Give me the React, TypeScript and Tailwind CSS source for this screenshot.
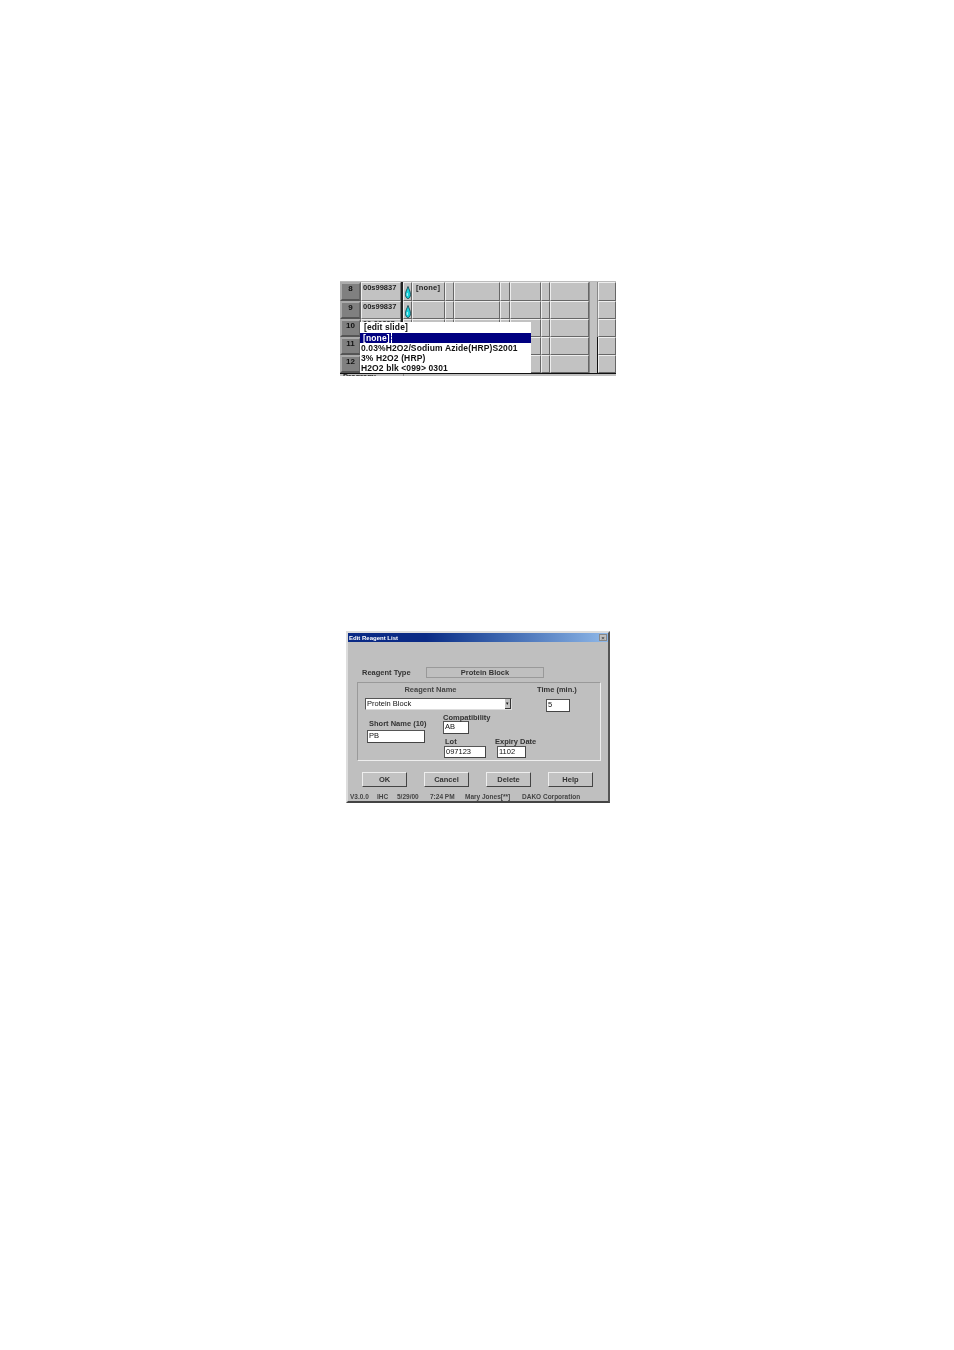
import { ReactNode } from "react";

const font = "font-['Liberation_Sans',Arial,sans-serif]";

function Cell({ w, children }: { w: string; children?: ReactNode }) {
  return (
    <div className={`${w} h-full shrink-0 overflow-hidden border border-t-[#eee] border-l-[#eee] border-r-[#666] border-b-[#666] bg-[#c2c2c2] text-[7.5px] font-bold leading-[10px] text-[#222]`}>
      {children}
    </div>
  );
}

function Drop() {
  return (
    <svg viewBox="0 0 6 13" className="ml-[1px] mt-[3px] block h-[13px] w-[6px]">
      <path d="M3 0.5 C3.6 3 5.5 5 5.5 8.5 C5.5 11 4.2 12.5 3 12.5 C1.8 12.5 0.5 11 0.5 8.5 C0.5 5 2.4 3 3 0.5 Z" fill="#19d3dc" stroke="#0a3a44" strokeWidth="0.8" />
      <path d="M2.3 7 L2.3 10" stroke="#e6ffff" strokeWidth="0.8" />
    </svg>
  );
}

type RowProps = { num: string; id?: string; label?: string; icon?: boolean; lined?: boolean; raised?: boolean; h: string };

function GridRow({ num, id, label, icon, lined, raised, h }: RowProps) {
  return (
    <div className={`flex ${h} items-stretch`}>
      <div className="flex h-full w-[21px] shrink-0 justify-center border-2 border-t-[#aaa] border-l-[#aaa] border-r-[#666] border-b-[#555] bg-[#808080] text-[8px] font-bold leading-[10px] text-[#111]">
        {num}
      </div>
      <div className="h-full w-[40px] shrink-0 border border-t-[#eee] border-l-[#eee] border-r-[#777] border-b-[#777] bg-[#c2c2c2] pl-[1px] text-[7.5px] font-bold leading-[10px] text-[#222]">
        <span className={raised ? "block -translate-y-[1px]" : "block"}>{id}</span>
      </div>
      <div className="h-full w-[2px] shrink-0 bg-[#222]" />
      <Cell w="w-[9px]">{icon && <Drop />}</Cell>
      <Cell w="w-[33px]">
        {label && <div className="pl-[3px] tracking-[0.2px]">{label}</div>}
      </Cell>
      <Cell w="w-[9px]" />
      <Cell w="w-[46px]" />
      <Cell w="w-[10px]" />
      <Cell w="w-[31px]" />
      <Cell w="w-[9px]" />
      <Cell w="w-[39px]" />
      <div className={`h-full w-[9px] shrink-0 border-x border-l-[#888] bg-[#c2c2c2] ${lined ? "border-r-[#111]" : "border-r-[#888]"}`} />
      <Cell w="w-[18px]" />
    </div>
  );
}

function Grid() {
  return (
    <div className="relative ml-[340px] h-[95px] w-[276px] overflow-hidden bg-[#c0c0c0]">
      <div className="h-[1px] bg-[#bbb]" />
      <GridRow h="h-[19px]" num="8" id="00s99837" label="[none]" icon />
      <GridRow h="h-[18px]" num="9" id="00s99837" icon />
      <GridRow h="h-[18px]" num="10" id="00-99837" raised />
      <GridRow h="h-[18px]" num="11" lined />
      <GridRow h="h-[18px]" num="12" lined />
      <div className="h-[1px] bg-[#111]" />
      <div className="flex">
        <div className="w-[64px] border-r border-r-[#888] pl-[3px] text-[7.5px] font-bold leading-[6px] text-[#222]">Program:</div>
      </div>
      {/* open dropdown list over the grid */}
      <div className="absolute left-[20px] top-[41px] h-[51px] w-[171px] bg-white text-[8.5px] font-bold tracking-[0.12px] text-[#111]">
        <div className="h-[11px] pl-[4px] leading-[11px]">[edit slide]</div>
        <div className="h-[10px] bg-[#000080] pl-[3px] leading-[10px] text-white">
          <span className="inline-block h-[10px] border-r border-dashed border-r-white pr-[1px]">[none]</span>
        </div>
        <div className="h-[10px] pl-[1px] leading-[10px]">0.03%H2O2/Sodium Azide(HRP)S2001</div>
        <div className="h-[10px] pl-[1px] leading-[10px]">3% H2O2 (HRP)</div>
        <div className="h-[10px] pl-[1px] leading-[10px]">H2O2 blk &lt;099&gt; 0301</div>
      </div>
    </div>
  );
}

function Field({ w, h, value }: { w: string; h: string; value: string }) {
  return (
    <div className={`${w} ${h} border border-t-[#555] border-l-[#555] border-r-[#444] border-b-[#444] bg-white pl-[1px] text-[7.5px] font-normal leading-[10px] text-[#111]`}>
      {value}
    </div>
  );
}

function Btn({ w, label }: { w: string; label: string }) {
  return (
    <div className={`${w} flex h-[15px] items-center justify-center border border-t-[#eee] border-l-[#eee] border-r-[#444] border-b-[#444] bg-[#c2c2c2] text-[7.5px] font-bold text-[#333]`}>
      {label}
    </div>
  );
}

function Dialog() {
  return (
    <div className="ml-[346px] h-[172px] w-[264px] border-2 border-t-[#ddd] border-l-[#ddd] border-r-[#555] border-b-[#444] bg-[#bfbfbf] text-[7.5px] leading-[10px] text-[#333]">
      <div className="flex h-[9px] items-center justify-between bg-gradient-to-r from-[#0a2a85] from-30% to-[#8fb8e8] pl-[1px] pr-[1px] text-[6px] font-bold text-white">
        <span>Edit Reagent List</span>
        <span className="flex h-[7px] w-[8px] items-center justify-center border border-[#888] bg-[#c0c0c0] text-[6px] leading-none text-[#444]">×</span>
      </div>

      <div className="mt-[25px] flex h-[11px] items-center pl-[14px]">
        <span className="w-[64px] font-semibold">Reagent Type</span>
        <div className="flex h-[11px] w-[118px] items-center justify-center border border-[#999] font-semibold">Protein Block</div>
      </div>

      <div className="ml-[9px] mt-[4px] h-[79px] w-[244px] border border-t-[#999] border-l-[#999] border-r-[#eee] border-b-[#eee]">
        <div className="flex pl-[7px] pt-[2px]">
          <div className="w-[172px]">
            <div className="w-[131px] text-center font-bold text-[#444]">Reagent Name</div>
            <div className="mt-[3px] flex h-[12px] w-[147px] items-center justify-between border border-t-[#555] border-l-[#555] border-r-[#ddd] border-b-[#ddd] bg-white pl-[1px] text-[#111]">
              <span>Protein Block</span>
              <span className="flex h-[10px] w-[6px] items-center justify-center border-b border-r border-b-[#333] border-r-[#333] bg-[#c2c2c2] text-[5px] leading-none">▾</span>
            </div>
          </div>
          <div className="font-semibold">
            <div>Time (min.)</div>
            <div className="ml-[9px] mt-[4px]">
              <Field w="w-[24px]" h="h-[13px]" value="5" />
            </div>
          </div>
        </div>

        <div className="flex pl-[9px]">
          <div className="w-[76px] pt-[7px]">
            <div className="pl-[2px] font-semibold">Short Name (10)</div>
            <div className="mt-[1px]">
              <Field w="w-[58px]" h="h-[13px]" value="PB" />
            </div>
          </div>
          <div>
            <div className="mt-[3px] font-semibold leading-[6px]">Compatibility</div>
            <Field w="w-[26px]" h="h-[13px]" value="AB" />
            <div className="mt-[3px] flex">
              <div className="w-[54px] pl-[1px]">
                <div className="pl-[1px] font-semibold leading-[9px]">Lot</div>
                <Field w="w-[42px]" h="h-[12px]" value="097123" />
              </div>
              <div>
                <div className="-ml-[2px] font-semibold leading-[9px]">Expiry Date</div>
                <Field w="w-[29px]" h="h-[12px]" value="1102" />
              </div>
            </div>
          </div>
        </div>
      </div>

      <div className="ml-[14px] mt-[11px] flex gap-[17px]">
        <Btn w="w-[45px]" label="OK" />
        <Btn w="w-[45px]" label="Cancel" />
        <Btn w="w-[45px]" label="Delete" />
        <Btn w="w-[45px]" label="Help" />
      </div>

      <div className="mt-[5px] flex whitespace-nowrap pl-[2px] text-[6.5px] font-bold text-[#444]">
        <span className="w-[27px]">V3.0.0</span>
        <span className="w-[20px]">IHC</span>
        <span className="w-[33px]">5/29/00</span>
        <span className="w-[35px]">7:24 PM</span>
        <span className="w-[57px]">Mary Jones[**]</span>
        <span>DAKO Corporation</span>
      </div>
    </div>
  );
}

export default function App() {
  return (
    <div className={`${font} min-h-[1350px] w-[954px] bg-white pt-[281px]`}>
      <div className="blur-[0.3px]">
        <Grid />
      </div>
      <div className="mt-[255px] blur-[0.3px]">
        <Dialog />
      </div>
    </div>
  );
}
